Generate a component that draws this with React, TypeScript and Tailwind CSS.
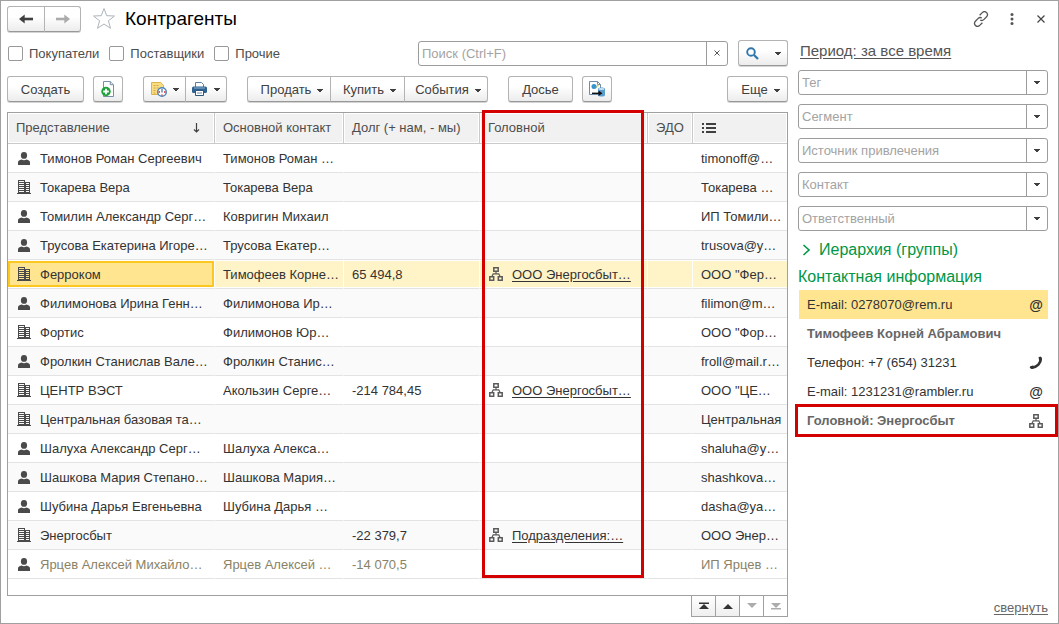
import * as React from 'react'
import { clsx } from 'clsx'

type Row = {
  kind: 'person' | 'company'
  name: string
  contact?: string
  debt?: string
  head?: string
  info: string
  selected?: boolean
  muted?: boolean
}

const rows: Row[] = [
  { kind: 'person', name: 'Тимонов Роман Сергеевич', contact: 'Тимонов Роман …', info: 'timonoff@…' },
  { kind: 'company', name: 'Токарева Вера', contact: 'Токарева Вера', info: 'Токарева …' },
  { kind: 'person', name: 'Томилин Александр Серг…', contact: 'Ковригин Михаил', info: 'ИП Томили…' },
  { kind: 'person', name: 'Трусова Екатерина Игоре…', contact: 'Трусова Екатер…', info: 'trusova@y…' },
  { kind: 'company', name: 'Ферроком', contact: 'Тимофеев Корне…', debt: '65 494,8', head: 'ООО Энергосбыт…', info: 'ООО "Фер…', selected: true },
  { kind: 'person', name: 'Филимонова Ирина Генн…', contact: 'Филимонова Ир…', info: 'filimon@m…' },
  { kind: 'company', name: 'Фортис', contact: 'Филимонов Юр…', info: 'ООО "Фор…' },
  { kind: 'person', name: 'Фролкин Станислав Вале…', contact: 'Фролкин Станис…', info: 'froll@mail.r…' },
  { kind: 'company', name: 'ЦЕНТР ВЭСТ', contact: 'Акользин Серге…', debt: '-214 784,45', head: 'ООО Энергосбыт…', info: 'ООО "ЦЕ…' },
  { kind: 'company', name: 'Центральная базовая та…', info: 'Центральная' },
  { kind: 'person', name: 'Шалуха Александр Серг…', contact: 'Шалуха Алекса…', info: 'shaluha@y…' },
  { kind: 'person', name: 'Шашкова Мария Степано…', contact: 'Шашкова Мария…', info: 'shashkova…' },
  { kind: 'person', name: 'Шубина Дарья Евгеньевна', contact: 'Шубина Дарья …', info: 'dasha@ya…' },
  { kind: 'company', name: 'Энергосбыт', debt: '-22 379,7', head: 'Подразделения:…', info: 'ООО Энер…' },
  { kind: 'person', name: 'Ярцев Алексей Михайло…', contact: 'Ярцев Алексей …', debt: '-14 070,5', info: 'ИП Ярцев …', muted: true },
]

const filters = ['Тег', 'Сегмент', 'Источник привлечения', 'Контакт', 'Ответственный']

const btn =
  'inline-flex h-[26px] items-center justify-center border border-[#b3b3b3] border-b-[#989898] bg-linear-to-b from-white from-40% to-[#ececec] text-[#404040] shadow-[0_1px_0_#d4d4d4]'
const textBtn = clsx(btn, 'pt-0.5')

function Caret({ className }: { className?: string }) {
  return (
    <svg width="6" height="3" viewBox="0 0 6 3" className={clsx('shrink-0', className)} shapeRendering="crispEdges" aria-hidden="true">
      <path d="M0 0h6v1H5v1H4v1H2V2H1V1H0z" fill="#404040" />
    </svg>
  )
}

function PersonIcon() {
  return (
    <svg width="14" height="14" viewBox="0 0 14 14" fill="#4a4a4a" aria-hidden="true">
      <ellipse cx="7" cy="4.4" rx="3.1" ry="3.4" />
      <path d="M1 14v-2.600C1 9.500 2.500 9 4.600 8.400c1.300 1 3.500 1 4.800 0 2.100.6 3.600 1.100 3.600 3V14z" />
    </svg>
  )
}

function CompanyIcon() {
  return (
    <svg width="14" height="14" viewBox="0 0 14 14" fill="#4a4a4a" shapeRendering="crispEdges" aria-hidden="true">
      <path d="M1 0h7v14H1zM2 1v1h5V1zM2 3v1h5V3zM2 5v1h5V5zM2 7v1h5V7zM2 9v1h5V9zM2 11v1h5v-1z" fillRule="evenodd" />
      <path d="M8 2h5v12H8zM9 3v1h3V3zM9 5v1h3V5zM9 7v1h3V7zM9 9v1h3V9zM9 11v1h3v-1z" fillRule="evenodd" />
      <path d="M0 13h14v1H0z" />
    </svg>
  )
}

function OrgIcon() {
  return (
    <svg width="14" height="14" viewBox="0 0 14 14" fill="none" stroke="#5a5a5a" aria-hidden="true" className="shrink-0">
      <path d="M4.800.8h4.400v3.400H4.800zM.8 9.800h3.900v3.400H.8zM9.300 9.800h3.900v3.400H9.300z" strokeWidth="1.500" />
      <path d="M7 4.500v2.200M2.900 9.500l1.300-2.600h5.600l1.300 2.600" strokeWidth="1.200" />
    </svg>
  )
}

function PhoneIcon() {
  return (
    <svg width="14" height="14" viewBox="0 0 14 14" aria-hidden="true">
      <path d="M11.700 2.500c.4 4.400-3.700 8.700-8.700 9.100" fill="none" stroke="#333" strokeWidth="2.600" />
      <path d="M9.500 1.200 11.300.6l1.700 1.200-.4 2.600-2.400.3zM.7 11.700l.5-1.400 2.700-.8 1 1-.6 2.300-2 .3z" fill="#333" />
    </svg>
  )
}

function Arrow({ left, color }: { left?: boolean; color: string }) {
  return (
    <svg width="14" height="10" viewBox="0 0 14 10" className={clsx(left && 'rotate-180')} aria-hidden="true">
      <path d="M0 5h11" stroke={color} strokeWidth="2.6" />
      <path d="M8.3.5 14 5 8.3 9.5z" fill={color} />
    </svg>
  )
}

function NewDocIcon() {
  return (
    <svg width="14" height="16" viewBox="0 0 14 16" aria-hidden="true">
      <path d="M2.5.5h6.8l3.2 3.2v11.8h-10z" fill="#fff" stroke="#7a8fa5" />
      <path d="M9.3.5v3.2h3.2" fill="#dfe7ee" stroke="#7a8fa5" />
      <circle cx="5" cy="10.5" r="4.7" fill="#1fa13a" />
      <path d="M5 7.7v5.6M2.2 10.5h5.6" stroke="#fff" strokeWidth="1.8" />
    </svg>
  )
}

function ReminderIcon() {
  return (
    <svg width="16" height="16" viewBox="0 0 16 16" aria-hidden="true">
      <path d="M.5 1.500h9.200l2.800 2.800v9.200H.5z" fill="#f8dd85" stroke="#dcb347" />
      <path d="M2.500 4.500h5M2.500 7h5M2.500 9.500h3M2.500 12h3" stroke="#d1a640" strokeDasharray="2 1" />
      <circle cx="11" cy="11" r="4.300" fill="#fff" stroke="#4d84ba" strokeWidth="1.400" />
      <path d="M11 8v3.500" fill="none" stroke="#234d80" />
      <path d="M13 11h1.500M7.500 11H9M10.500 14h1" stroke="#d82626" strokeWidth="1.400" />
    </svg>
  )
}

function PrinterIcon() {
  return (
    <svg width="15" height="14" viewBox="0 0 15 14" aria-hidden="true">
      <path d="M3.5 5V.5h6l2 2V5" fill="#fff" stroke="#5d7d9e" />
      <rect y="4.500" width="15" height="6.500" rx="1.500" fill="#2f6290" />
      <path d="M2 6h11" stroke="#8db3d3" />
      <path d="M3.500 8.500h8v5h-8z" fill="#fff" stroke="#2d567e" />
      <path d="M5 11h5" stroke="#6c8dac" />
    </svg>
  )
}

function ExportIcon() {
  return (
    <svg width="16" height="16" viewBox="0 0 16 16" aria-hidden="true">
      <path d="M.5.5h8l3 3v10H.5z" fill="#fff" stroke="#6d8cab" />
      <path d="M8.500.5v3h3" fill="none" stroke="#6d8cab" />
      <circle cx="5" cy="5.500" r="2.500" fill="#3293d6" />
      <path d="M5 5.500 7.500 5v2z" fill="#67ad45" />
      <path d="M8 3.500h1.500v2H8z" fill="#efbd38" />
      <path d="M9 8c0-2 7-2 7 0v6c0 2-7 2-7 0z" fill="#5a9dcd" />
      <ellipse cx="12.500" cy="8" rx="3" ry="1" fill="#cce4f3" />
      <path d="M3 12.300h7" stroke="#111" strokeWidth="1.400" />
      <path d="M9.500 9.500 13.500 12.300 9.500 15z" fill="#111" />
    </svg>
  )
}

function PageArrow({ down, bar, disabled }: { down?: boolean; bar?: boolean; disabled?: boolean }) {
  return (
    <svg width="10" height="8" viewBox="0 0 10 8" className={clsx(down && 'rotate-180')} fill={disabled ? '#acacac' : '#333'} aria-hidden="true">
      {bar && <path d="M0 .5h10v1.500H0z" />}
      <path d="M5 2l5 5H0z" />
    </svg>
  )
}

function Check({ label }: { label: string }) {
  return (
    <label className="flex items-center gap-[6px] text-[#4d4d4d]">
      <input type="checkbox" className="size-[15px] appearance-none rounded-[2px] border border-[#999] bg-white checked:bg-[#ffe48f]" />
      <span className="pt-0.5">{label}</span>
    </label>
  )
}

function Combo({ label }: { label: string }) {
  return (
    <div className="flex h-[25px] overflow-hidden rounded-[3px] border border-[#9c9c9c] bg-white">
      <input aria-label={label} placeholder={label} className="min-w-0 flex-1 px-[3px] placeholder:text-[#a3a3a3] focus:outline-none" />
      <button aria-label={`Выбрать: ${label}`} className="flex w-[21px] items-center justify-center border-l border-[#9c9c9c]">
        <Caret />
      </button>
    </div>
  )
}

type CellProps = {
  row: Row
  first?: boolean
  icon?: React.ReactNode
  children?: React.ReactNode
}

function Cell({ row, first, icon, children }: CellProps) {
  return (
    <td className={clsx('border-r border-b border-b-[#e3e3e3] p-0 last:border-r-0', row.selected ? 'border-r-white bg-white' : 'border-r-transparent')}>
      <div
        className={clsx(
          'my-px flex h-[26px] items-center overflow-hidden whitespace-nowrap',
          row.selected && !first && 'bg-[#fff3c8]',
          row.selected && first && 'bg-[#ffe58f] shadow-[inset_0_0_0_2px_#fcc71e]',
          icon ? 'gap-[9px] pl-[9px]' : 'pl-2',
        )}
      >
        {icon}
        <span className="pt-0.5">{children}</span>
      </div>
    </td>
  )
}

function Table() {
  const th = 'h-[31px] border-b border-r border-[#cacaca] bg-[#f1f1f1] pl-2 text-left font-normal whitespace-nowrap text-[#4d4d4d] shadow-[inset_0_0_0_1px_#fff] last:border-r-0'
  return (
    <div className="relative flex-1 border border-[#a0a0a0]">
      <table className="w-full table-fixed border-separate border-spacing-0">
        <colgroup>
          <col className="w-[207px]" />
          <col className="w-[129px]" />
          <col className="w-[136px]" />
          <col className="w-[168px]" />
          <col className="w-[45px]" />
          <col />
        </colgroup>
        <thead>
          <tr>
            <th className={th}>
              <div className="flex items-center justify-between pr-[14px]">
                Представление
                <svg width="7" height="10" viewBox="0 0 7 10" fill="none" stroke="#404040" aria-hidden="true">
                  <path d="M3.500 0v9M1 6.500l2.500 2.500L6 6.500" strokeWidth="1.200" />
                </svg>
              </div>
            </th>
            <th className={th}>Основной контакт</th>
            <th className={th}>Долг (+ нам, - мы)</th>
            <th className={th}>Головной</th>
            <th className={th}>ЭДО</th>
            <th className={th} aria-label="Информация">
              <svg width="14" height="10" viewBox="0 0 14 10" className="ml-px" fill="#404040" shapeRendering="crispEdges" aria-hidden="true">
                <path d="M0 0h2v2H0zM4 0h10v2H4zM0 4h2v2H0zM4 4h10v2H4zM0 8h2v2H0zM4 8h10v2H4z" />
              </svg>
            </th>
          </tr>
        </thead>
        <tbody>
          {rows.map((row) => (
            <tr key={row.name} className={clsx('even:bg-[#fafafa]', row.muted ? 'text-[#8a8266]' : 'text-[#333]')}>
              <Cell row={row} first icon={row.kind === 'person' ? <PersonIcon /> : <CompanyIcon />}>
                {row.name}
              </Cell>
              <Cell row={row}>{row.contact}</Cell>
              <Cell row={row}>{row.debt}</Cell>
              <Cell row={row} icon={row.head && <OrgIcon />}>
                {row.head && <a href="#head" className="underline underline-offset-2">{row.head}</a>}
              </Cell>
              <Cell row={row} />
              <Cell row={row}>{row.info}</Cell>
            </tr>
          ))}
        </tbody>
      </table>
      {/* frame around the "Головной" column */}
      <div className="pointer-events-none absolute -top-[3px] left-[474px] h-[468px] w-[162px] border-3 border-[#d40000]" />
    </div>
  )
}

function Sidebar() {
  const item = 'flex h-[29px] items-center justify-between pr-[5px] pl-2'
  return (
    <aside className="flex w-[250px] shrink-0 flex-col">
      <div className="h-[30px] pl-[2px]">
        <a href="#period" className="text-[15px] leading-[22px] text-[#555] underline underline-offset-2">Период: за все время</a>
      </div>
      <div className="flex flex-col gap-[9px]">
        {filters.map((f) => (
          <Combo key={f} label={f} />
        ))}
      </div>
      <h2 className="mt-[6px] text-[16px] leading-[26px] text-[#009646]">
        <button className="flex items-center gap-2 pl-1">
          <svg width="9" height="12" viewBox="0 0 9 12" fill="none" stroke="#009646" strokeWidth="1.600" aria-hidden="true">
            <path d="M1.500 1l5.500 5-5.500 5" />
          </svg>
          Иерархия (группы)
        </button>
      </h2>
      <h2 className="pt-px text-[16px] leading-[26px] text-[#009646]">Контактная информация</h2>
      <ul className="ml-px text-[#333]">
        <li className={clsx(item, 'bg-[#ffe58f]')}>
          E-mail: 0278070@rem.ru
          <span className="text-[14px] font-bold">@</span>
        </li>
        <li className={clsx(item, 'font-bold text-[#666]')}>Тимофеев Корней Абрамович</li>
        <li className={item}>
          Телефон: +7 (654) 31231
          <PhoneIcon />
        </li>
        <li className={item}>
          E-mail: 1231231@rambler.ru
          <span className="text-[14px] font-bold">@</span>
        </li>
        <li className={clsx(item, 'relative font-bold text-[#666]')}>
          Головной: Энергосбыт
          <OrgIcon />
          <span className="pointer-events-none absolute -top-[2px] -right-[10px] -bottom-[2px] -left-1 border-3 border-[#d40000]" />
        </li>
      </ul>
      <a href="#collapse" className="mt-auto self-end text-[#666] underline underline-offset-2">свернуть</a>
    </aside>
  )
}

export default function App() {
  return (
    <div className="flex min-h-screen flex-col border border-[#a0a0a0] bg-white pt-[5px] pr-[10px] pb-[6px] pl-[6px] font-['Liberation_Sans',Arial,sans-serif] text-[13px] leading-[18px]">
      <header className="flex h-[25px] items-center">
        <div className="flex">
          <button aria-label="Назад" className={clsx(btn, 'w-[38px] rounded-l-[3px]')}>
            <Arrow left color="#404040" />
          </button>
          <button aria-label="Вперед" className={clsx(btn, '-ml-px w-[37px] rounded-r-[3px]')}>
            <Arrow color="#ababab" />
          </button>
        </div>
        <button aria-label="В избранное" className="ml-[11px]">
          <svg width="24" height="23" viewBox="0 0 24 23" fill="none" stroke="#aeb4bb" aria-hidden="true">
            <path d="M12 1.500l2.700 7.200 7.800.3-6.100 4.800 2.100 7.500L12 17l-6.500 4.300 2.100-7.500L1.500 9l7.800-.3z" />
          </svg>
        </button>
        <h1 className="ml-[9px] text-[19px] leading-6 text-black">Контрагенты</h1>
        <div className="ml-auto flex items-center">
          <button aria-label="Ссылка" className="mr-[21px]">
            <svg width="16" height="16" viewBox="0 0 16 16" fill="none" stroke="#555" strokeWidth="1.300" aria-hidden="true">
              <path d="M6.600 4.300l2.700-2.700c1.300-1.300 3-1.200 4.200-.1 1.300 1.200 1.400 3 .1 4.300L10.800 8.600c-1 1-2.500 1.100-3.600.4M9.400 11.700l-2.700 2.700c-1.300 1.300-3 1.200-4.200.1-1.300-1.200-1.400-3-.1-4.300l2.800-2.800c1-1 2.500-1.100 3.600-.4" />
            </svg>
          </button>
          <button aria-label="Меню" className="mr-[23px]">
            <svg width="4" height="12" viewBox="0 0 4 12" fill="#555" aria-hidden="true">
              <circle cx="2" cy="1.600" r="1.500" />
              <circle cx="2" cy="6" r="1.500" />
              <circle cx="2" cy="10.400" r="1.500" />
            </svg>
          </button>
          <button aria-label="Закрыть" className="mr-[3px]">
            <svg width="8" height="8" viewBox="0 0 8 8" stroke="#444" strokeWidth="1.200" aria-hidden="true">
              <path d="M.5.5l7 7M7.500.5l-7 7" />
            </svg>
          </button>
        </div>
      </header>

      <div className="flex flex-1 gap-[10px] pt-[9px]">
        <main className="flex min-w-0 flex-1 flex-col">
          <div className="flex h-[26px] items-center">
            <div className="ml-px flex gap-[10px]">
              <Check label="Покупатели" />
              <Check label="Поставщики" />
              <Check label="Прочие" />
            </div>
            <div className="ml-auto flex h-[25px] w-[310px] overflow-hidden rounded-[3px] border border-[#9c9c9c]">
              <input aria-label="Поиск" placeholder="Поиск (Ctrl+F)" className="min-w-0 flex-1 px-[3px] pt-0.5 placeholder:text-[#a3a3a3] focus:outline-none" />
              <button aria-label="Очистить" className="flex w-[21px] items-center justify-center border-l border-[#9c9c9c]">
                <svg width="6" height="6" viewBox="0 0 6 6" stroke="#555" aria-hidden="true">
                  <path d="M.5.5l5 5M5.500.5l-5 5" />
                </svg>
              </button>
            </div>
            <button aria-label="Найти" className={clsx(btn, 'ml-[10px] w-[50px] gap-4 rounded-[3px]')}>
              <svg width="13" height="13" viewBox="0 0 13 13" fill="none" stroke="#2f76ad" aria-hidden="true">
                <circle cx="5" cy="5" r="3.800" strokeWidth="1.900" />
                <path d="M8 8l4 4" strokeWidth="2.300" />
              </svg>
              <Caret />
            </button>
          </div>

          <div className="my-[10px] flex">
            <button className={clsx(textBtn, 'w-[77px] rounded-[3px]')}>Создать</button>
            <button aria-label="Новый документ" className={clsx(btn, 'ml-[9px] w-[30px] rounded-[3px]')}>
              <NewDocIcon />
            </button>
            <button aria-label="Напоминание" className={clsx(btn, 'ml-5 w-[43px] gap-[6px] rounded-l-[3px]')}>
              <ReminderIcon />
              <Caret />
            </button>
            <button aria-label="Печать" className={clsx(btn, '-ml-px w-[42px] gap-[7px] rounded-r-[3px]')}>
              <PrinterIcon />
              <Caret />
            </button>
            <button className={clsx(textBtn, 'ml-5 w-[84px] gap-[6px] rounded-l-[3px] pl-[6px]')}>
              Продать
              <Caret />
            </button>
            <button className={clsx(textBtn, '-ml-px w-[75px] gap-[6px] pl-1')}>
              Купить
              <Caret />
            </button>
            <button className={clsx(textBtn, '-ml-px w-[84px] gap-[6px] rounded-r-[3px] pl-1')}>
              События
              <Caret />
            </button>
            <button className={clsx(textBtn, 'ml-5 w-[65px] rounded-[3px]')}>Досье</button>
            <button aria-label="Обмен" className={clsx(btn, 'ml-[9px] w-[30px] rounded-[3px]')}>
              <ExportIcon />
            </button>
            <button className={clsx(textBtn, 'ml-auto w-[61px] gap-[6px] rounded-[3px] pl-[6px]')}>
              Еще
              <Caret />
            </button>
          </div>

          <Table />
          <div className="-mt-px flex self-end border border-[#a0a0a0] bg-white">
            <button aria-label="В начало" className="flex h-5 w-[23px] items-center justify-center bg-linear-to-b from-white to-[#efefef]">
              <PageArrow bar />
            </button>
            <button aria-label="Вверх" className="flex h-5 w-6 items-center justify-center border-l border-[#a0a0a0] bg-linear-to-b from-white to-[#efefef]">
              <PageArrow />
            </button>
            <button aria-label="Вниз" disabled className="flex h-5 w-6 items-center justify-center border-l border-[#a0a0a0]">
              <PageArrow down disabled />
            </button>
            <button aria-label="В конец" disabled className="flex h-5 w-6 items-center justify-center border-l border-[#a0a0a0]">
              <PageArrow down bar disabled />
            </button>
          </div>
        </main>
        <Sidebar />
      </div>
    </div>
  )
}
